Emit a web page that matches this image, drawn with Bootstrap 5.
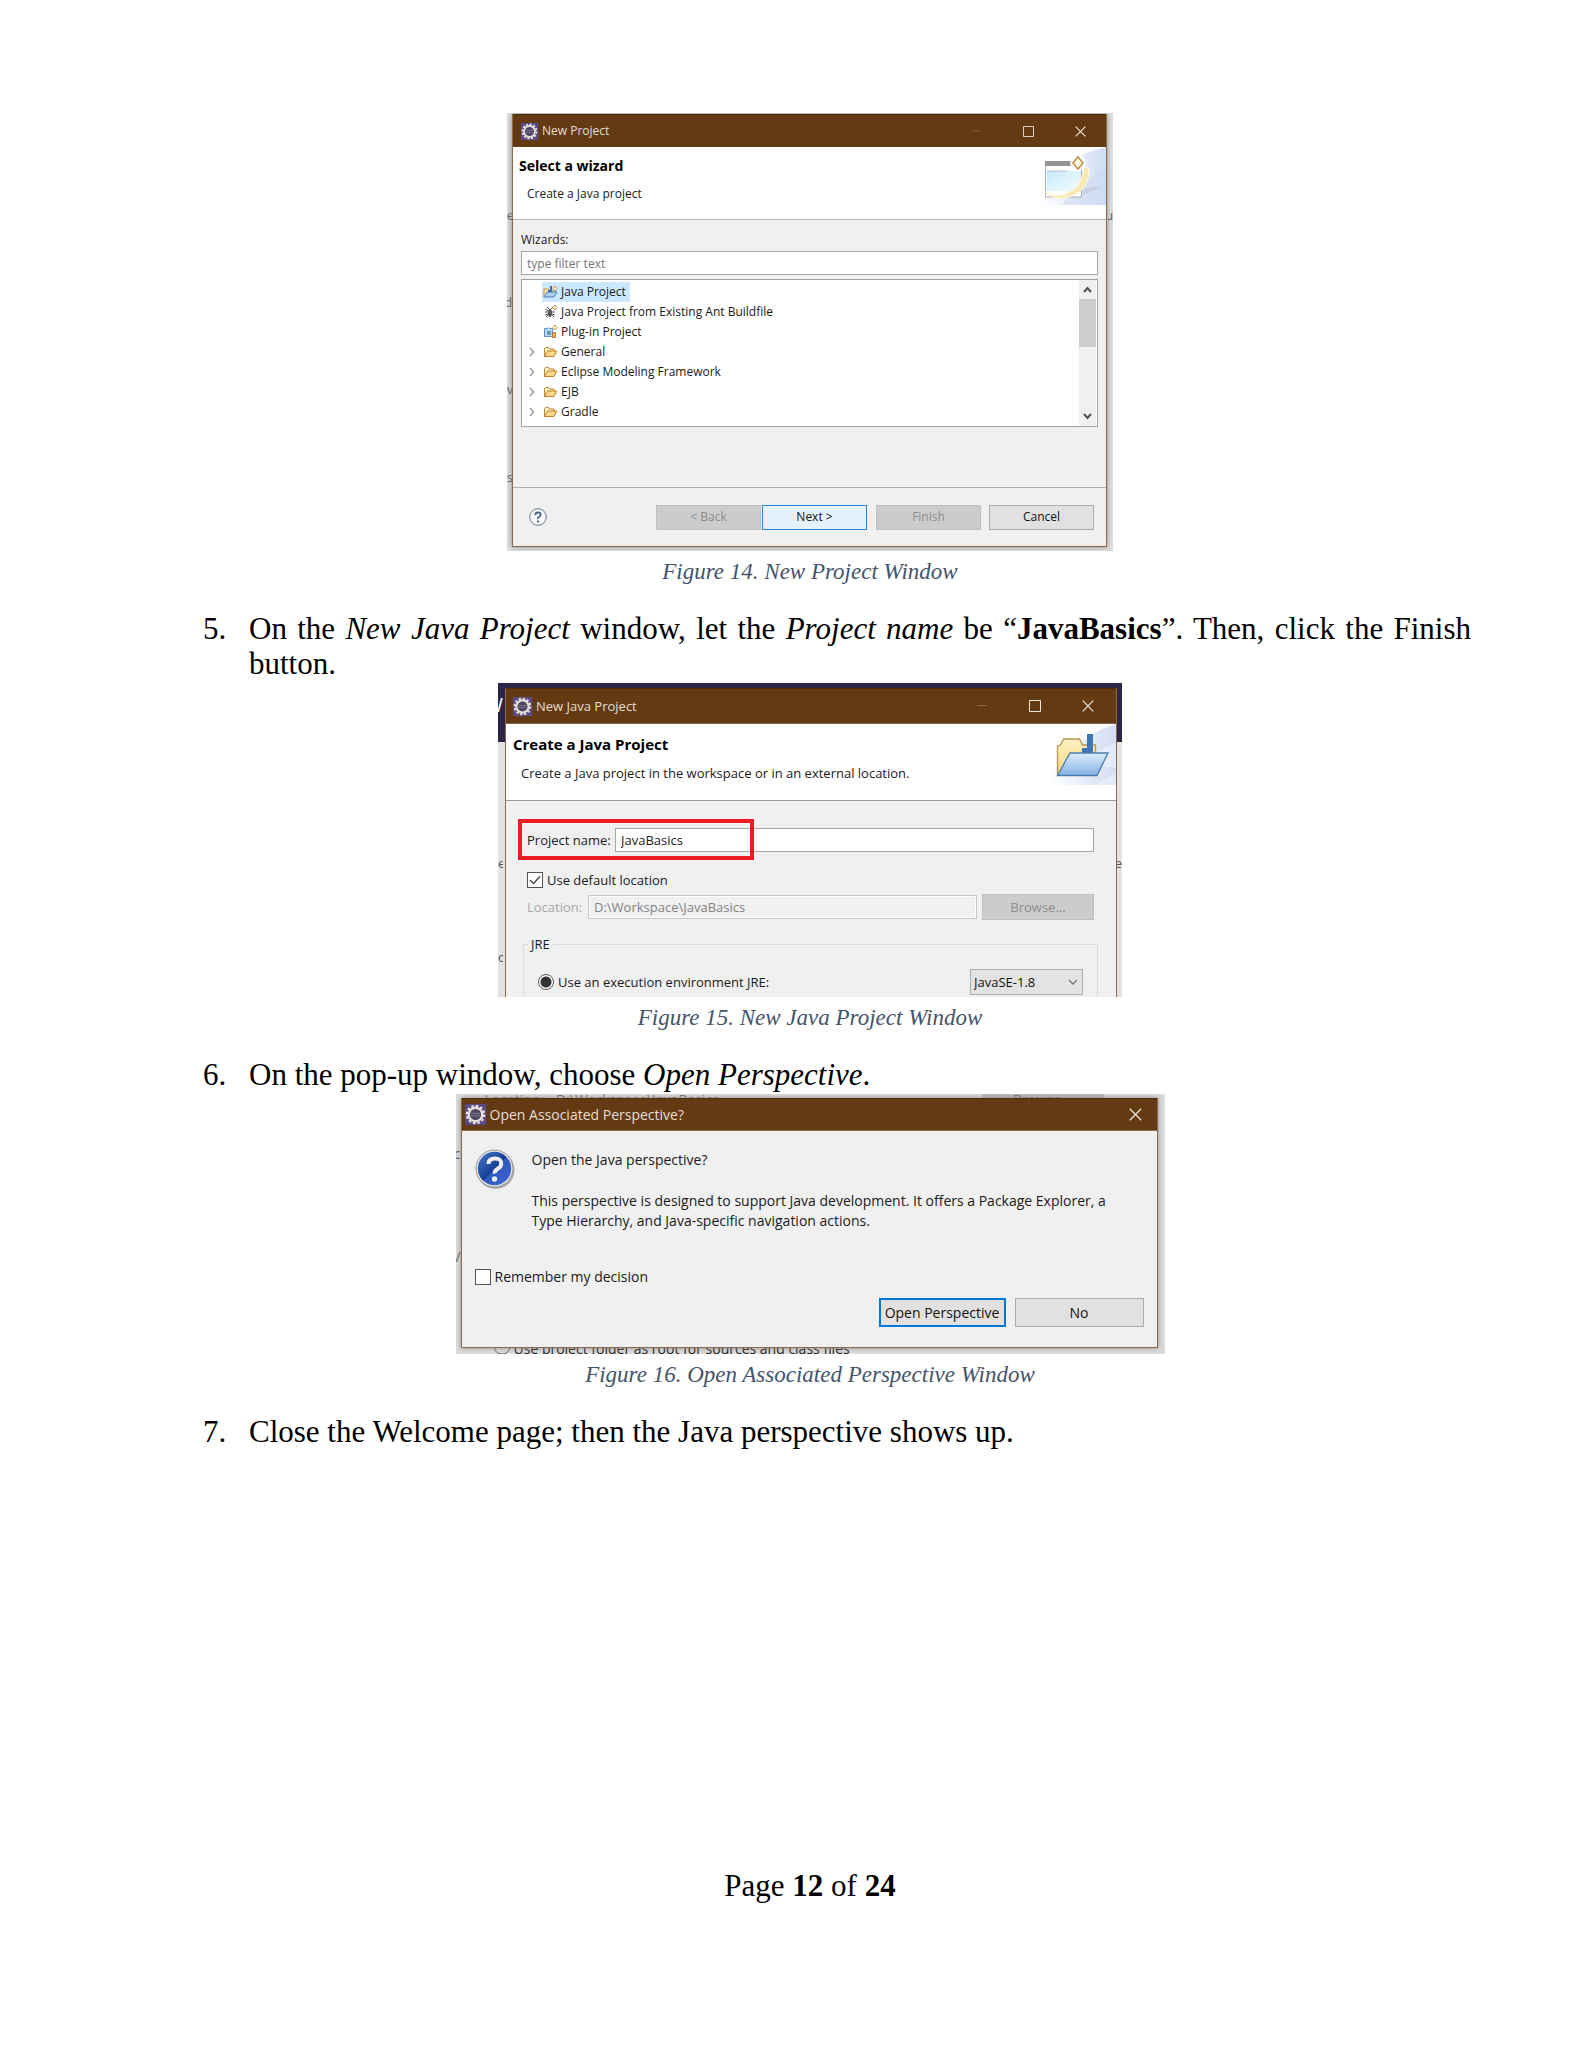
<!DOCTYPE html>
<html lang="en">
<head>
<meta charset="utf-8">
<meta name="viewport" content="width=device-width, initial-scale=1">
<title>Page 12 of 24</title>
<link href="https://cdn.jsdelivr.net/npm/bootstrap@5.3.0/dist/css/bootstrap.min.css" rel="stylesheet">
<style>
body{background:#fff;color:#000;font:31px/35px "Liberation Serif",serif}
.sheet{min-height:2048px;padding:113px 112px 0 149px}
.step{padding:26px 0 2px 54px;text-align:justify}
.step-no{flex:0 0 46px}
figure{margin:0 auto}
figcaption{font-size:23px;line-height:26px;font-style:italic;color:#44546a;text-align:center}
.page-no{margin-top:auto;padding-bottom:145px;font-size:31px;text-align:center}

/* window captures */
.shot{position:relative;overflow:hidden;margin:0 auto;color:#1a1a1a;font-family:"Open Sans","Noto Sans",sans-serif}
.shot14{max-width:606px;padding:1px 6px 4px 5px;background:#dedede;font-size:12px;line-height:20px}
.shot15{max-width:624px;padding:5px 5px 0 7px;background:linear-gradient(#2d2548 59px,#e2e2e2 59px);font-size:13px;line-height:20px}
.shot16{max-width:709px;padding:0 7px 0 5px;background:#dcdcdc;font-size:14px;line-height:20px}
.win{position:relative;background:#f0f0f0;border:1px solid #8a6a4a;border-top:0;box-shadow:0 0 5px #888}
.shot15 .win{border-bottom:0;box-shadow:none}
.titlebar{background:#643a12;color:#e6ddd4;height:33px;padding:0 20px 0 8px;border-top:1px solid #4d2d0e}
.shot15 .titlebar{height:36px;padding:0 22px 0 7px;border-bottom:1px solid #8a6a4a}
.shot16 .titlebar{padding:0 15px 0 3px;border-bottom:1px solid #8a6a4a}
.win-btn{border:0;padding:0;background:none;line-height:0;display:block}
.win-btns{display:flex;gap:41px}
.banner{background:#fff;height:73px;border-bottom:1px solid #b9b9b9;padding-left:6px}
.shot15 .banner{height:77px;border-bottom-color:#9a9a9a;padding-left:7px}
.banner h2{font-size:14px;line-height:20px;font-weight:700;margin:9px 0 8px;color:#000}
.shot15 .banner h2{font-size:15px;margin:10px 0 9px}
.banner p{margin:0 0 0 8px}
.banner svg{display:block}
.pane14{padding:10px 8px 0;height:267px}
.field{border:1px solid #a6a6a6;border-radius:0;background:#fff;font:inherit;line-height:20px;padding:0 5px;color:#1a1a1a;min-width:0;height:24px}
.pane14 .field{margin-top:1px}
.field::placeholder{color:#757575;opacity:1}
.field:disabled{background:#f0f0f0;color:#838383;border-color:#c8c8c8;box-shadow:inset 0 0 0 1px #fff;opacity:1}
.tree{background:#fff;border:1px solid #a0a3aa;height:148px;margin-top:4px}
.tree ul{padding:2px 0 0 6px;margin:0;list-style:none}
.tree li{display:flex;align-items:center;height:20px}
.tree li.leaf{padding-left:14px}
.tree .twist{flex:none;width:8px;height:10px;margin-right:6px}
.tree .pick{display:flex;align-items:center;gap:3px;padding:0 4px 0 1px;height:20px}
.tree .chosen{background:#cce8ff}
.scroller{width:17px;margin-right:1px;background:#f0f0f0}
.thumb{height:48px;background:#cdcdcd}
.foot14{border-top:1px solid #b0b0b0;height:59px;padding:0 12px 0 16px}
.foot14 .primary{margin:0 9px 0 1px}
.push{width:105px;height:25px;border:1px solid #adadad;background:#e1e1e1;color:#111;font:inherit;line-height:20px;padding:0}
.push:disabled{background:#ccc;border-color:#bfbfbf;color:#8c8c8c}
.push.primary{background:#e5f1fb;border-color:#2a86d8}
.pane15{padding:19px 18px 0 12px;height:196px}
.name-row{padding:8px 4px 0 9px}
.name-row label{width:88px}
.check-row{margin:18px 0 0 9px}
.loc-row{margin:4px 4px 0 9px}
.loc-row label{width:61px;color:#a8a8a8}
.loc-row .push{width:112px;height:26px;margin-left:5px}
.marked{border:4px solid #ed1c24;width:236px;height:41px;left:12px;top:18px;position:absolute}
.tick{appearance:none;width:16px;height:16px;margin:0;border:1px solid #555;background:#fff;display:block}
.ticked{grid-area:1/1}
.tick-box{display:grid}
.tick-box svg{grid-area:1/1;pointer-events:none}
.rad{border-radius:50%;background:radial-gradient(circle,#333 5px,#fff 6px)}
.group{border:1px solid #dcdcdc;border-bottom:0;margin:14px 0 0 5px;height:64px;padding:0 14px 0 14px;min-width:0}
.group legend{float:none;width:auto;font-size:13px;line-height:20px;margin:0 0 0 -10px;padding:0 3px;height:20px}
.env-row{margin-top:15px}
.combo{width:113px;height:26px;appearance:none;border:1px solid #adadad;background:#e3e3e3;color:#111;font:inherit;padding:0 3px;border-radius:0}
.pane16{padding:18px 13px 0;height:216px}
.pane16 .push{width:129px;height:29px}
.pane16 .push.primary{width:127px;border:2px solid #0078d7;background:#e1e1e1}
.message{margin-left:17px}
.message .ask{margin:1px 0 21px}
.remember{margin-top:36px}
.choices{gap:9px;margin-top:11px}
.strip{overflow:hidden;white-space:nowrap;color:#777}
.strip-top{height:4px;line-height:12px;padding-left:24px;gap:12px}
.strip-top .ghost-btn{width:122px;margin:0 54px 0 auto;background:#bcbcbc;text-align:center}
.strip-bottom{height:6px;padding-left:33px;gap:4px;color:#222}
.strip-bottom span{margin-top:-9px}

/* slivers of the page behind each window */
.frag{position:absolute;left:0;width:5px;overflow:hidden;height:20px;color:#555;white-space:nowrap}
.frag.tail{direction:rtl}
.frag.east{left:auto;right:0}
.y1{top:93px}.y2{top:180px}.y3{top:267px}.y4{top:355px}
.y5{top:12px;color:#fff;font-size:20px}.y6{top:170px}.y7{top:264px}
.y8{top:50px}.y9{top:153px}
</style>
</head>
<body>
<svg class="position-absolute" width="0" height="0" aria-hidden="true">
  <defs>
    <linearGradient id="sky" x1="0" x2="1"><stop offset="0" stop-color="#fff"/><stop offset="1" stop-color="#d3def3"/></linearGradient>
    <linearGradient id="pane" x1="0" y1="0" x2="1" y2="1"><stop offset="0" stop-color="#c5eafa"/><stop offset="1" stop-color="#f4fcff"/></linearGradient>
    <linearGradient id="blue" x1="0" y1="0" x2="0" y2="1"><stop offset="0" stop-color="#dcecfb"/><stop offset="1" stop-color="#83b3e2"/></linearGradient>
    <linearGradient id="gold" x1="0" y1="0" x2="0" y2="1"><stop offset="0" stop-color="#fff3c4"/><stop offset="1" stop-color="#f0d27a"/></linearGradient>
    <linearGradient id="orb" x1="0" y1="0" x2="1" y2="1"><stop offset="0" stop-color="#4779d0"/><stop offset=".5" stop-color="#173f96"/><stop offset=".52" stop-color="#3059bd"/><stop offset="1" stop-color="#4066d2"/></linearGradient>
    <symbol id="gear" viewBox="0 0 18 18"><path fill="#5c4a86" d="M0 0h18v18H0z"/><circle cx="9" cy="9" r="7.4" fill="none" stroke="#e8e2da" stroke-width="2" stroke-dasharray="2.2 1.67"/><circle cx="9" cy="9" r="5.8" fill="#4c4661" stroke="#e4ded8" stroke-width="2"/><path d="M5 8h8M5 10h8" stroke="#77718c"/></symbol>
    <symbol id="folder" viewBox="0 0 14 14"><path d="M1 11.5v-8l1-1h3l1 1.500h4.500V6" fill="#fdf0c2" stroke="#bd832f"/><path d="M1 11.500 4 6h9.300l-2.800 5.500z" fill="#f9d88a" stroke="#bd832f"/></symbol>
    <symbol id="more" viewBox="0 0 8 10"><path d="m2 1 3.500 4L2 9" fill="none" stroke="#999" stroke-width="1.400"/></symbol>
    <symbol id="min" viewBox="0 0 12 12"><path d="M1 5.500h10" stroke="#89684a"/></symbol>
    <symbol id="max" viewBox="0 0 12 12"><path d="M.5.5h11v11H.5z" fill="none" stroke="#eee5dc"/></symbol>
    <symbol id="close" viewBox="0 0 12 12"><path d="m.7.7 10.600 10.600M11.300.7.7 11.300" fill="none" stroke="#eee5dc" stroke-width="1.200"/></symbol>
  </defs>
</svg>

<main class="sheet d-flex flex-column">
  <figure class="w-100">
    <div class="shot shot14">
      <span class="frag y1">er</span><span class="frag y2 tail">d</span><span class="frag y3">ve</span><span class="frag y4">s</span><span class="frag y1 east tail">u</span>
      <div class="win">
        <div class="titlebar d-flex align-items-center">
          <svg width="17" height="17"><use href="#gear"/></svg><span class="ms-1 me-auto">New Project</span>
          <div class="win-btns">
            <button class="win-btn" aria-label="Minimize" disabled><svg width="11" height="11"><use href="#min"/></svg></button>
            <button class="win-btn" aria-label="Maximize"><svg width="11" height="11"><use href="#max"/></svg></button>
            <button class="win-btn" aria-label="Close"><svg width="11" height="11"><use href="#close"/></svg></button>
          </div>
        </div>
        <div class="banner d-flex justify-content-between">
          <div><h2>Select a wizard</h2><p>Create a Java project</p></div>
          <svg width="66" height="58" viewBox="0 0 66 58"><path d="M0 58V52Q20 40 34 15Q44 4 66 0V58z" fill="url(#sky)"/><path d="M66 18Q45 36 20 58H66z" fill="#c9d8f2" opacity=".45"/><path d="M44 42q10-4 17-2l-18 8z" fill="#c7d1e0"/><path d="M5.500 15h36v35h-36z" fill="#fff" stroke="#a6abb4"/><path d="M5 14h28v5H5z" fill="#929297"/><path d="M7 24h34v20H7z" fill="url(#pane)"/><path d="M7 24h20" stroke="#bbc"/><path d="M4 44Q15 52 28 46Q42 40 44 20L49 21Q50 44 29 50Q13 54 4 44z" fill="#f8eab2" stroke="#fff8dc"/><circle cx="38" cy="16" r="8" fill="#fff" opacity=".85"/><path d="m38 10 5 6-5 6-5-6z" fill="#fffbe8" stroke="#c58b3d" stroke-width="1.500"/></svg>
        </div>
        <div class="pane14">
          <label class="d-block" for="filter">Wizards:</label>
          <input class="field w-100 d-block" id="filter" placeholder="type filter text">
          <div class="tree d-flex justify-content-between">
            <ul>
              <li class="leaf"><span class="pick chosen"><svg width="15" height="14" viewBox="0 0 15 14"><path d="M1 12V4h4l1 2h5" fill="#fff1be" stroke="#c18b3d"/><path d="m1 12 3-5h10l-3 5z" fill="#a6cff0" stroke="#4c83b8"/><path d="M8 1v5H5" fill="none" stroke="#3c6ea8" stroke-width="2"/><path d="m12 1 2 2.500-2 2.500-2-2.500z" fill="#fff" stroke="#ce8e35"/></svg>Java Project</span></li>
              <li class="leaf"><span class="pick"><svg width="15" height="14" viewBox="0 0 15 14"><path d="m4 2 3 3 3-3M2 7h10M3 12l4-4 4 4M2 4l3 2M2 10l3-1M12 10l-3-1" fill="none" stroke="#555"/><ellipse cx="7" cy="8" rx="2" ry="4" fill="#555"/><path d="m12 0 2 2.500L12 5l-2-2.500z" fill="#fff" stroke="#ce8e35"/></svg>Java Project from Existing Ant Buildfile</span></li>
              <li class="leaf"><span class="pick"><svg width="15" height="14" viewBox="0 0 15 14"><path d="M1.500 3.500h3l1-1 1 1h3v8h-8z" fill="#b8d8f0" stroke="#668fb7"/><path d="M4 6h4v4H4z" fill="#6198ca"/><path d="M9.500 7.500h3v5h-3z" fill="#e7b761" stroke="#b47a35"/><path d="m12 0 2 2.500L12 5l-2-2.500z" fill="#fff" stroke="#ce8e35"/></svg>Plug-in Project</span></li>
              <li><svg class="twist"><use href="#more"/></svg><span class="pick"><svg width="15" height="14"><use href="#folder"/></svg>General</span></li>
              <li><svg class="twist"><use href="#more"/></svg><span class="pick"><svg width="15" height="14"><use href="#folder"/></svg>Eclipse Modeling Framework</span></li>
              <li><svg class="twist"><use href="#more"/></svg><span class="pick"><svg width="15" height="14"><use href="#folder"/></svg>EJB</span></li>
              <li><svg class="twist"><use href="#more"/></svg><span class="pick"><svg width="15" height="14"><use href="#folder"/></svg>Gradle</span></li>
            </ul>
            <div class="scroller d-flex flex-column">
              <svg width="17" height="19" viewBox="0 0 17 19"><path d="m5 12 3.500-4 3.500 4" fill="none" stroke="#505050" stroke-width="2"/></svg>
              <div class="thumb"></div>
              <svg class="mt-auto" width="17" height="19" viewBox="0 0 17 19"><path d="m5 7 3.500 4L12 7" fill="none" stroke="#505050" stroke-width="2"/></svg>
            </div>
          </div>
        </div>
        <div class="foot14 d-flex align-items-center">
          <button class="win-btn me-auto" aria-label="Help"><svg width="18" height="18" viewBox="0 0 18 18"><circle cx="9" cy="9" r="8.300" fill="#f8f9fb" stroke="#687790"/><path d="M6.300 7Q6.400 4.500 9 4.500t2.700 2.300Q11.700 8 10 9t-1 2" fill="none" stroke="#4d6288" stroke-width="1.800"/><path d="M8 12.500h2v2H8z" fill="#4d6288"/></svg></button>
          <button class="push" disabled>&lt; Back</button>
          <button class="push primary">Next &gt;</button>
          <button class="push me-2" disabled>Finish</button>
          <button class="push">Cancel</button>
        </div>
      </div>
    </div>
    <figcaption class="pt-2">Figure 14. New Project Window</figcaption>
  </figure>

  <div class="step d-flex"><span class="step-no">5.</span><p class="mb-0">On the <em>New Java Project</em> window, let the <em>Project name</em> be “<strong>JavaBasics</strong>”. Then, click the Finish button.</p></div>

  <figure class="w-100">
    <div class="shot shot15">
      <span class="frag y5 tail">W</span><span class="frag y6">e</span><span class="frag y7">o</span><span class="frag y6 east tail">e</span>
      <div class="win">
        <div class="titlebar d-flex align-items-center">
          <svg width="19" height="19"><use href="#gear"/></svg><span class="ms-1 me-auto">New Java Project</span>
          <div class="win-btns">
            <button class="win-btn" aria-label="Minimize" disabled><svg width="12" height="12"><use href="#min"/></svg></button>
            <button class="win-btn" aria-label="Maximize"><svg width="12" height="12"><use href="#max"/></svg></button>
            <button class="win-btn" aria-label="Close"><svg width="12" height="12"><use href="#close"/></svg></button>
          </div>
        </div>
        <div class="banner d-flex justify-content-between">
          <div><h2>Create a Java Project</h2><p>Create a Java project in the workspace or in an external location.</p></div>
          <svg width="70" height="61" viewBox="0 0 70 61"><path d="M0 61Q3 48 18 38Q36 10 70 0V61z" fill="url(#sky)"/><path d="M70 18 30 40l40 4zM50 61l20-12v12z" fill="#fff" opacity=".35"/><path d="M11.500 51V22l3-1 3-6h16l3 6h13v30z" fill="url(#gold)" stroke="#b79451" stroke-width="1.300"/><path d="M41 10h6v19H36v-5h5z" fill="#3d75b5"/><path d="M11.500 51.500 24 29h38L51 51.500z" fill="url(#blue)" stroke="#4e7dac" stroke-width="1.300"/></svg>
        </div>
        <div class="pane15 position-relative">
          <div class="name-row d-flex align-items-center"><label for="pname" class="flex-shrink-0">Project name:</label><input id="pname" class="field flex-grow-1" value="JavaBasics"></div>
          <div class="marked"></div>
          <div class="check-row d-flex align-items-center gap-1"><span class="tick-box"><input type="checkbox" class="tick ticked" id="defloc" checked><svg width="16" height="16" viewBox="0 0 16 16"><path d="m3 8 3.500 3.500L13 4.500" fill="none" stroke="#444" stroke-width="1.400"/></svg></span><label for="defloc">Use default location</label></div>
          <div class="loc-row d-flex align-items-center"><label for="loc" class="flex-shrink-0">Location:</label><input id="loc" class="field flex-grow-1" value="D:\Workspace\JavaBasics" disabled><button class="push" disabled>Browse...</button></div>
          <fieldset class="group"><legend>JRE</legend>
            <div class="env-row d-flex align-items-center justify-content-between">
              <span class="d-flex align-items-center gap-1"><input type="radio" class="tick rad" id="env" checked><label for="env">Use an execution environment JRE:</label></span>
              <span class="position-relative d-flex"><select class="combo" aria-label="Execution environment"><option>JavaSE-1.8</option></select><svg class="position-absolute end-0 top-0 pe-none" width="20" height="26" viewBox="0 0 20 26"><path d="m6 11 4 4 4-4" fill="none" stroke="#777" stroke-width="1.400"/></svg></span>
            </div>
          </fieldset>
        </div>
      </div>
    </div>
    <figcaption class="pt-2">Figure 15. New Java Project Window</figcaption>
  </figure>

  <div class="step d-flex"><span class="step-no">6.</span><p class="mb-0">On the pop-up window, choose <em>Open Perspective</em>.</p></div>

  <figure class="w-100">
    <div class="shot shot16">
      <span class="frag y8 tail">c</span><span class="frag y9">/</span>
      <div class="strip strip-top d-flex"><span>Location:</span><span>D:\Workspace\JavaBasics</span><span class="ghost-btn">Browse...</span></div>
      <div class="win">
        <div class="titlebar d-flex align-items-center">
          <svg width="21" height="21"><use href="#gear"/></svg><span class="ms-1 me-auto">Open Associated Perspective?</span>
          <button class="win-btn" aria-label="Close"><svg width="13" height="13"><use href="#close"/></svg></button>
        </div>
        <div class="pane16 d-flex flex-column">
          <div class="d-flex">
            <svg class="flex-shrink-0" width="40" height="40" viewBox="0 0 40 40"><circle cx="20.500" cy="21" r="19" fill="#aaa"/><circle cx="19.500" cy="19.500" r="18.500" fill="#e6e6e6" stroke="#999"/><circle cx="19.500" cy="19.500" r="16.700" fill="url(#orb)"/><path d="M13.500 15Q13.500 9.500 20 9.500t6.200 5.500Q26 18 22.500 20T20 24.500" fill="none" stroke="#eee" stroke-width="4"/><circle cx="19.500" cy="30" r="2.700" fill="#eee"/></svg>
            <div class="message"><p class="ask">Open the Java perspective?</p><p class="mb-0">This perspective is designed to support Java development. It offers a Package Explorer, a<br>Type Hierarchy, and Java-specific navigation actions.</p></div>
          </div>
          <div class="remember d-flex align-items-center gap-1"><input type="checkbox" id="remember" class="tick"><label for="remember">Remember my decision</label></div>
          <div class="choices d-flex justify-content-end"><button class="push primary">Open Perspective</button><button class="push">No</button></div>
        </div>
      </div>
      <div class="strip strip-bottom d-flex"><svg class="flex-shrink-0" width="16" height="6" viewBox="0 0 16 6"><path d="M.5 0a7.500 6 0 0 0 15 0" fill="none" stroke="#666"/></svg><span>Use project folder as root for sources and class files</span></div>
    </div>
    <figcaption class="pt-2">Figure 16. Open Associated Perspective Window</figcaption>
  </figure>

  <div class="step d-flex"><span class="step-no">7.</span><p class="mb-0">Close the Welcome page; then the Java perspective shows up.</p></div>

  <footer class="page-no">Page <strong>12</strong> of <strong>24</strong></footer>
</main>
<script src="https://cdn.jsdelivr.net/npm/bootstrap@5.3.0/dist/js/bootstrap.bundle.min.js"></script>
</body>
</html>
